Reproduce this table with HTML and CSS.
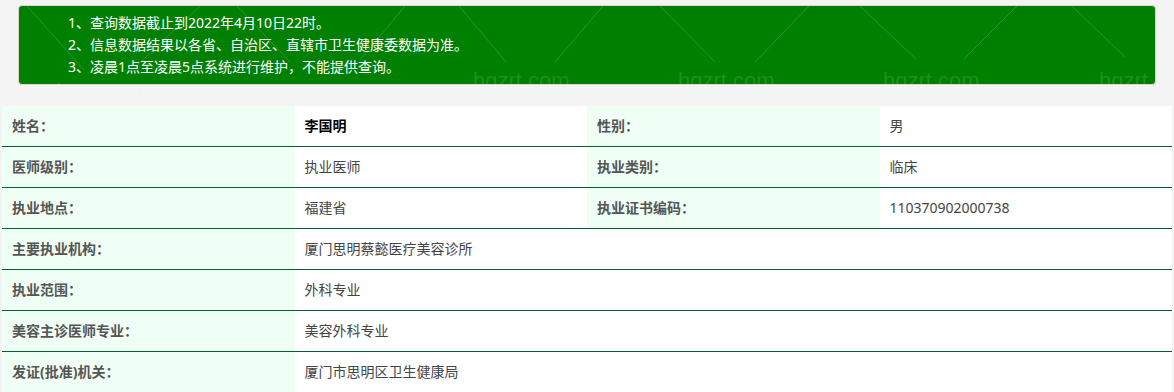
FILE: index.html
```html
<!DOCTYPE html>
<html lang="zh-CN">
<head>
<meta charset="utf-8">
<title>医师执业信息查询</title>
<link rel="stylesheet" href="styles.css">
</head>
<body>
<div class="page">
  <div class="notice">
    <p>1、查询数据截止到2022年4月10日22时。</p>
    <p>2、信息数据结果以各省、自治区、直辖市卫生健康委数据为准。</p>
    <p>3、凌晨1点至凌晨5点系统进行维护，不能提供查询。</p>
  </div>
  <table class="info">
    <colgroup><col><col><col><col></colgroup>
    <tbody>
      <tr>
        <td class="label">姓名：</td>
        <td class="value name">李国明</td>
        <td class="label">性别：</td>
        <td class="value">男</td>
      </tr>
      <tr>
        <td class="label">医师级别：</td>
        <td class="value">执业医师</td>
        <td class="label">执业类别：</td>
        <td class="value">临床</td>
      </tr>
      <tr>
        <td class="label">执业地点：</td>
        <td class="value">福建省</td>
        <td class="label">执业证书编码：</td>
        <td class="value">110370902000738</td>
      </tr>
      <tr>
        <td class="label">主要执业机构：</td>
        <td class="value" colspan="3">厦门思明蔡懿医疗美容诊所</td>
      </tr>
      <tr>
        <td class="label">执业范围：</td>
        <td class="value" colspan="3">外科专业</td>
      </tr>
      <tr>
        <td class="label">美容主诊医师专业：</td>
        <td class="value" colspan="3">美容外科专业</td>
      </tr>
      <tr>
        <td class="label">发证(批准)机关：</td>
        <td class="value" colspan="3">厦门市思明区卫生健康局</td>
      </tr>
    </tbody>
  </table>
  <svg class="watermark" width="1174" height="392" viewBox="0 0 1174 392" aria-hidden="true">
    <g class="wm-lines">
      <line x1="27" y1="6" x2="84" y2="70"/>
      <line x1="200" y1="6" x2="130" y2="72"/>
      <line x1="237" y1="6" x2="290" y2="62"/>
      <line x1="405" y1="6" x2="360" y2="60"/>
      <line x1="459" y1="6" x2="506" y2="62"/>
      <line x1="603" y1="6" x2="555" y2="62"/>
      <line x1="660" y1="6" x2="715" y2="62"/>
      <line x1="809" y1="6" x2="755" y2="62"/>
      <line x1="860" y1="6" x2="916" y2="59"/>
      <line x1="1017" y1="6" x2="964" y2="59"/>
      <line x1="1072" y1="6" x2="1125" y2="57"/>
    </g>
    <g class="wm-text">
      <text x="56" y="99">hgzrt.com</text>
      <text x="473" y="88">hgzrt.com</text>
      <text x="678" y="88">hgzrt.com</text>
      <text x="883" y="88">hgzrt.com</text>
      <text x="1099" y="88">hgzrt.</text>
    </g>
  </svg>
</div>
</body>
</html>
```

FILE: styles.css
```css
html, body {
  margin: 0;
  padding: 0;
  background: #f4f4f4;
}

body {
  font-family: "Noto Sans", "Noto Sans CJK SC", sans-serif;
  font-size: 14px;
  color: #333;
}

.page {
  position: relative;
  width: 1174px;
  height: 392px;
  overflow: hidden;
  padding: 5px 2px 0;
  box-sizing: border-box;
}

.notice {
  margin: 0 16px 21px;
  height: 80px;
  box-sizing: border-box;
  padding: 6px 15px 6px 49px;
  background: #008000;
  border: 1px solid #ebccd1;
  border-radius: 4px;
  color: #fff;
}

.notice p {
  margin: 0;
  line-height: 22px;
  white-space: nowrap;
}

.info {
  width: 1170px;
  table-layout: fixed;
  border-collapse: separate;
  border-spacing: 0;
}

.info col {
  width: 25%;
}

.info td {
  height: 40px;
  padding: 0 10px;
  border-bottom: 1px solid #00602f;
  line-height: 20px;
  vertical-align: middle;
  white-space: nowrap;
}

.info .label {
  background: #f0fff6;
  color: #555;
  font-weight: bold;
}

.info .value {
  background: #fff;
  color: #444;
}

.info .name {
  color: #000;
  font-weight: bold;
}

.watermark {
  position: absolute;
  left: 0;
  top: 0;
  pointer-events: none;
}

.wm-lines line {
  stroke: rgba(255, 255, 255, 0.16);
  stroke-width: 1;
}

.wm-text text {
  font-family: "Liberation Sans", sans-serif;
  font-size: 22px;
  fill: rgba(255, 255, 255, 0.13);
}
```
